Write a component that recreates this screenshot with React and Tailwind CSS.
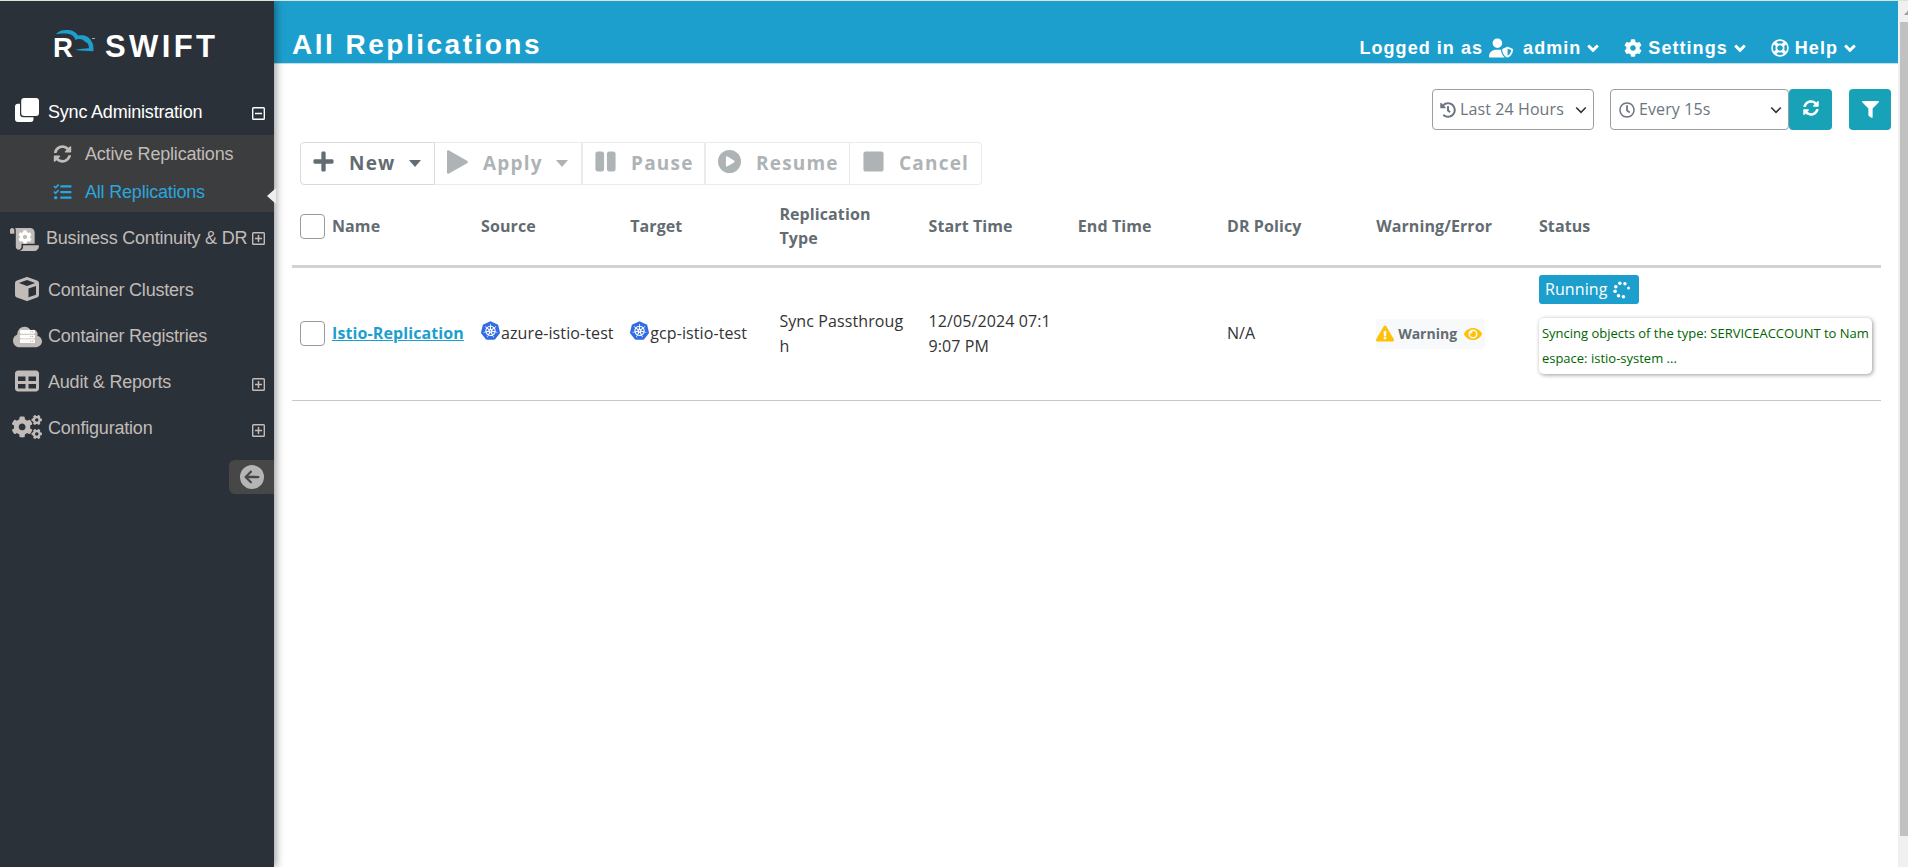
import {
  FaCloud,
  FaCog,
  FaCogs,
  FaExclamationTriangle,
  FaEye,
  FaFilter,
  FaHistory,
  FaPause,
  FaPlus,
  FaRegClock,
  FaRegLifeRing,
  FaScroll,
  FaServer,
  FaStop,
  FaSyncAlt,
  FaTasks,
} from "react-icons/fa";
import { FaCircleArrowLeft, FaCirclePlay, FaCube, FaTable, FaUserShield } from "react-icons/fa6";
import { SiKubernetes } from "react-icons/si";

const toolbarButtons = [
  { label: "New", icon: PlusIcon, size: "w-[135px] border-l pl-[12px]", caret: true, enabled: true },
  { label: "Apply", icon: PlayIcon, size: "w-[147px] border-l-0 pl-[12px]", caret: true },
  { label: "Pause", icon: PauseIcon, size: "w-[123px] border-l pl-[12px]" },
  { label: "Resume", icon: ResumeIcon, size: "w-[145px] border-l pl-[12px]" },
  { label: "Cancel", icon: StopIcon, size: "w-[132px] border-l-0 pl-[13px]" },
];

const columns = [
  "Source",
  "Target",
  "Replication Type",
  "Start Time",
  "End Time",
  "DR Policy",
  "Warning/Error",
];

const rows = [
  {
    name: "Istio-Replication",
    source: "azure-istio-test",
    target: "gcp-istio-test",
    type: "Sync Passthrough",
    start: "12/05/2024 07:19:07 PM",
    end: "",
    policy: "N/A",
    status: "Running",
    message: "Syncing objects of the type: SERVICEACCOUNT to Namespace: istio-system ...",
  },
];

function PlusIcon() {
  return <FaPlus className="h-[23px] w-[21px]" />;
}

function PlayIcon() {
  return (
    <svg viewBox="0 0 21 24" className="h-[24px] w-[21px]" fill="currentColor">
      <path d="M0 1.6C0 .4 1 0 2 .5l18 10.2c1 .6 1 1.9 0 2.5L2 23.500c-1 .5-2 .1-2-1.1z" />
    </svg>
  );
}

function PauseIcon() {
  return <FaPause className="h-[23px] w-[21px]" />;
}

function ResumeIcon() {
  return <FaCirclePlay className="h-[23px] w-[23px]" />;
}

function StopIcon() {
  return <FaStop className="h-[23px] w-[21px]" />;
}

function CloneIcon() {
  return (
    <svg viewBox="0 0 24 24" className="h-6 w-6" fill="currentColor">
      <rect x="6.200" y="0" width="17.800" height="18" rx="3" />
      <path d="M5 5.800H3a3 3 0 0 0-3 3V21a3 3 0 0 0 3 3h12.500a3 3 0 0 0 3-3v-1.800H8.500A3.500 3.500 0 0 1 5 15.700z" />
    </svg>
  );
}

function Chevron({ className }) {
  return (
    <svg viewBox="0 0 12 8" className={className} fill="none" stroke="currentColor">
      <path d="M1.2 1.5 6 6.3l4.8-4.8" />
    </svg>
  );
}

function Expander({ open }) {
  return (
    <svg viewBox="0 0 13 13" className="h-[13px] w-[13px] shrink-0" fill="none" stroke="currentColor">
      <rect x="0.7" y="0.7" width="11.6" height="11.6" rx="0.8" strokeWidth="1.4" />
      <path d={open ? "M3 6.5h7" : "M3 6.5h7M6.5 3v7"} strokeWidth="1.5" />
    </svg>
  );
}

function Logo() {
  return (
    <div className="flex h-[87px] items-start pl-[54px] pt-[27px] text-white">
      <svg viewBox="0 0 44 34" className="h-[34px] w-[44px] shrink-0" fill="none">
        <path
          d="M2 6.200C5 2.500 9 2 13 2c5 0 9 2 11 5.600 6-1.600 12 1 13.500 6 1.600 1.800 2.200 5 1.900 9.600-6-.1-12-.4-18.400-1.400 4.600-.6 10-1.300 14-1.500-.2-3.900-1.300-5.600-3.700-6.200-2.200-3.200-6.800-4-9.800-2.200C20 7.600 16.500 5.600 12 5.500 8 5.300 5 5.400 2 6.200z"
          fill="#1d9fce"
        />
        <text x="-1" y="29" fontSize="28" textLength="20" lengthAdjust="spacingAndGlyphs" className="fill-white font-bold">
          R
        </text>
        <path d="M38 10.500h3" stroke="#aaa" />
      </svg>
      <span className="ml-[7px] text-[31px] font-bold leading-[37px] tracking-[3.4px]">SWIFT</span>
    </div>
  );
}

function NavItem({ icon, label, expander, open, className = "h-[46px]", iconClass = "w-[36px]", expanderClass = "pt-1" }) {
  return (
    <div className={`flex items-center pl-[12px] pr-[9px] ${open ? "text-white" : "text-[#c1bcb8]"} ${className}`}>
      <span className={`flex shrink-0 ${iconClass}`}>{icon}</span>
      <span className="flex-1 whitespace-nowrap text-[18px] tracking-[-0.2px]">{label}</span>
      {expander && (
        <span className={expanderClass}>
          <Expander open={open} />
        </span>
      )}
    </div>
  );
}

function Sidebar() {
  return (
    <aside className="relative z-10 w-[274px] shrink-0 bg-[#2b3138] font-['Liberation_Sans',sans-serif] shadow-[2px_0_8px_rgba(0,0,0,0.4)]">
      <Logo />
      <NavItem
        icon={<CloneIcon />}
        label="Sync Administration"
        expander
        open
        className="h-[47px] pt-[1px]"
        iconClass="w-[36px] pb-[4px] pl-[3px]"
        expanderClass="pt-[3px]"
      />
      <div className="relative h-[77px] bg-[#3b3d3e] text-[18px] tracking-[-0.2px]">
        <div className="flex h-[38px] items-center pl-[53px] text-[#c1bcb8]">
          <FaSyncAlt className="mr-[13px] h-[18px] w-[19px]" />
          Active Replications
        </div>
        <div className="flex h-[38px] items-center pl-[53px] text-[#2ba6de]">
          <FaTasks className="mr-[13px] h-[18px] w-[19px]" />
          All Replications
        </div>
        <svg viewBox="0 0 9 16" className="absolute right-[-2px] top-[53px] h-[16px] w-[9px]" fill="#eee">
          <path d="M9 0v16L0 8z" />
        </svg>
      </div>
      <NavItem
        icon={
          <span className="relative">
            <FaScroll className="h-[25px] w-[29px]" />
            <FaCog className="absolute left-[8px] top-[3px] h-[14px] w-[14px] text-white" />
          </span>
        }
        label="Business Continuity & DR"
        expander
        className="mb-[3px] h-[52px]"
        iconClass="-ml-[2px] w-[36px] pt-[2px]"
        expanderClass="pt-0"
      />
      <NavItem
        icon={<FaCube className="h-6 w-6" />}
        label="Container Clusters"
        iconClass="w-[36px] pb-[2px] pl-[3px]"
      />
      <NavItem
        icon={
          <span className="relative">
            <FaCloud className="h-[24px] w-[29px]" />
            <FaServer className="absolute left-[7px] top-[4px] h-[15px] w-[15px] text-white" />
          </span>
        }
        label="Container Registries"
        iconClass="w-[36px] pl-[1px] pt-[2px]"
      />
      <NavItem
        icon={<FaTable className="h-6 w-6" />}
        label="Audit & Reports"
        expander
        iconClass="w-[36px] pb-[3px] pl-[3px]"
      />
      <NavItem
        icon={<FaCogs className="h-6 w-[30px]" />}
        label="Configuration"
        expander
        iconClass="w-[36px] pb-[2px]"
      />
      <div className="ml-auto mt-[9px] flex h-[34px] w-[45px] items-center rounded-l-[6px] bg-[#474747] pl-[11px] text-[#b5b5b5]">
        <FaCircleArrowLeft className="h-6 w-6" />
      </div>
    </aside>
  );
}

function Header() {
  return (
    <header className="flex h-[63px] items-start justify-between border-b border-[#c5dde6] bg-[#1d9fce] pl-[18px] pr-[42px] font-['Liberation_Sans',sans-serif] font-bold text-white">
      <h1 className="mt-[24px] text-[28px] leading-[40px] tracking-[2.5px]">All Replications</h1>
      <div className="mt-[35px] flex items-center text-[18px] leading-[24px] tracking-[1.05px]">
        <span>Logged in as</span>
        <FaUserShield className="ml-[6px] h-5 w-[24px]" />
        <span className="ml-[10px]">admin</span>
        <Chevron className="ml-[6px] h-[8px] w-[12px] stroke-[3]" />
        <FaCog className="ml-[25px] h-[18px] w-[18px]" />
        <span className="ml-[6px]">Settings</span>
        <Chevron className="ml-[6px] h-[8px] w-[12px] stroke-[3]" />
        <FaRegLifeRing className="ml-[25px] h-[18px] w-[18px]" />
        <span className="ml-[6px]">Help</span>
        <Chevron className="ml-[6px] h-[8px] w-[12px] stroke-[3]" />
      </div>
    </header>
  );
}

function Filters() {
  return (
    <div className="flex justify-end pr-[7px] pt-[25px] text-[16px] text-[#6c757d]">
      <div className="flex h-[41px] w-[162px] items-center rounded-[4px] border border-[#9a9fa4] pl-[7px] pr-[6px]">
        <FaHistory className="h-4 w-4" />
        <span className="ml-[4px] flex-1 whitespace-nowrap pb-px tracking-[0.1px]">Last 24 Hours</span>
        <Chevron className="h-[8px] w-[12px] stroke-[1.6] text-[#333]" />
      </div>
      <div className="ml-[16px] flex h-[41px] w-[179px] items-center rounded-[4px] border border-[#9a9fa4] pl-[8px] pr-[6px]">
        <FaRegClock className="h-4 w-4" />
        <span className="ml-[4px] flex-1 whitespace-nowrap pb-px tracking-[0.1px]">Every 15s</span>
        <Chevron className="h-[8px] w-[12px] stroke-[1.6] text-[#333]" />
      </div>
      <button className="flex h-[41px] w-[43px] items-center justify-center rounded-[4px] bg-[#17a2b8] pb-[3px] text-white">
        <FaSyncAlt className="h-4 w-4" />
      </button>
      <button className="ml-[17px] flex h-[41px] w-[42px] items-center justify-center rounded-[4px] bg-[#17a2b8] text-white">
        <FaFilter className="h-[17px] w-[17px]" />
      </button>
    </div>
  );
}

function Toolbar() {
  return (
    <div className="ml-[26px] mt-[12px] flex">
      {toolbarButtons.map(({ label, icon: Icon, size, caret, enabled }) => (
        <button
          key={label}
          className={`flex h-[43px] items-center border-y border-r text-[19px] font-bold tracking-[1.2px] first:rounded-l-[4px] last:rounded-r-[4px] ${size} ${
            enabled ? "border-[#d8dadb] text-[#636c72]" : "border-[#ebebeb] text-[#aeb3b6]"
          }`}
        >
          <span className="-mt-[4px] shrink-0">
            <Icon />
          </span>
          <span className="ml-[15px]">{label}</span>
          {caret && (
            <svg viewBox="0 0 12 7" className="ml-[13px] h-[7px] w-[12px]" fill="currentColor">
              <path d="M0 0h12L6 7z" />
            </svg>
          )}
        </button>
      ))}
    </div>
  );
}

function Checkbox() {
  return <span className="mr-[7px] h-[25px] w-[25px] shrink-0 rounded-[4px] border border-[#9a9a9a] bg-white" />;
}

function Cluster({ name }) {
  return (
    <div className="flex items-center whitespace-nowrap">
      <SiKubernetes className="mb-[7px] mr-[1px] h-[19px] w-[19px] shrink-0 text-[#326ce5]" />
      {name}
    </div>
  );
}

function Spinner() {
  return (
    <svg viewBox="0 0 18 18" className="ml-[6px] h-[18px] w-[18px]" fill="#fff">
      <circle cx="6.800" cy="2.300" r="1.800" />
      <circle cx="11.900" cy="2.800" r="1.700" />
      <circle cx="2.800" cy="5.700" r="1.800" />
      <circle cx="2.100" cy="10.300" r="1.800" />
      <circle cx="15.500" cy="7" r="1.500" />
      <circle cx="5.500" cy="14.700" r="1.800" />
      <circle cx="10.400" cy="15.700" r="1.800" />
    </svg>
  );
}

const grid = "grid grid-cols-[181px_repeat(6,149.2px)_162.800px_1fr] items-center";

function ReplicationTable() {
  return (
    <div className="ml-[18px] mr-[17px] mt-px text-[16px] tracking-[0.1px]">
      <div className={`${grid} h-[82px] border-b-[3px] border-[#d2d2d2] pt-[1px] font-bold leading-[24px] text-[#636c72]`}>
        <div className="flex items-center pl-[8px]">
          <Checkbox />
          Name
        </div>
        {columns.map((column) => (
          <div key={column} className="w-[125px] pl-[8px]">
            {column}
          </div>
        ))}
        <div className="pl-[8px]">Status</div>
      </div>
      {rows.map((row) => (
        <div key={row.name} className={`${grid} h-[133px] border-b border-[#c8c8c8] pb-[1px] leading-[25px] text-[#333]`}>
          <div className="flex items-center whitespace-nowrap pl-[8px]">
            <Checkbox />
            <a className="font-bold text-[#1d9fce] underline">{row.name}</a>
          </div>
          <div className="pl-[8px]">
            <Cluster name={row.source} />
          </div>
          <div className="pl-[8px]">
            <Cluster name={row.target} />
          </div>
          <div className="break-all pl-[8px] pr-[13px]">{row.type}</div>
          <div className="break-all pl-[8px] pr-[13px]">{row.start}</div>
          <div className="px-[8px]">{row.end}</div>
          <div className="px-[8px]">{row.policy}</div>
          <div className="pl-[8px]">
            <span className="flex h-[30px] w-[109px] items-center rounded-[4px] bg-[#f8f9fa] text-[14px] font-bold tracking-normal text-[#636c72]">
              <FaExclamationTriangle className="mr-[4px] h-[17px] w-[18px] text-[#ffc107]" />
              Warning
              <FaEye className="ml-[7px] h-[16px] w-[18px] text-[#ffc107]" />
            </span>
          </div>
          <div className="self-start pl-[8px] pt-[7px]">
            <span className="flex h-[29px] w-[100px] items-center rounded-[3px] bg-[#1d9fce] pl-[6px] text-white">
              {row.status}
              <Spinner />
            </span>
            <div className="mt-[14px] h-[56px] w-[333px] break-all rounded-[5px] bg-white py-[3px] pl-[3px] pr-[3px] text-[13px] tracking-normal text-[#006400] shadow-[1px_1px_4px_rgba(0,0,0,0.4)]">
              {row.message}
            </div>
          </div>
        </div>
      ))}
    </div>
  );
}

function Scrollbar() {
  return (
    <div className="flex w-[10px] shrink-0 flex-col overflow-hidden bg-[#f0f0f0] pl-[2px]">
      <svg viewBox="0 0 8 21" className="h-[21px] w-[8px] shrink-0" fill="#a0a0a0">
        <path d="M4 14 8 9.500V14z" />
      </svg>
      <div className="h-[814px] bg-[#c1c1c1]" />
    </div>
  );
}

function App() {
  return (
    <div className="flex h-[867px] w-[1908px] overflow-hidden border-t border-[#dbe5d5] bg-white font-['Open_Sans',sans-serif]">
      <Sidebar />
      <main className="min-w-0 flex-1">
        <Header />
        <Filters />
        <Toolbar />
        <ReplicationTable />
      </main>
      <Scrollbar />
    </div>
  );
}

export default App;
